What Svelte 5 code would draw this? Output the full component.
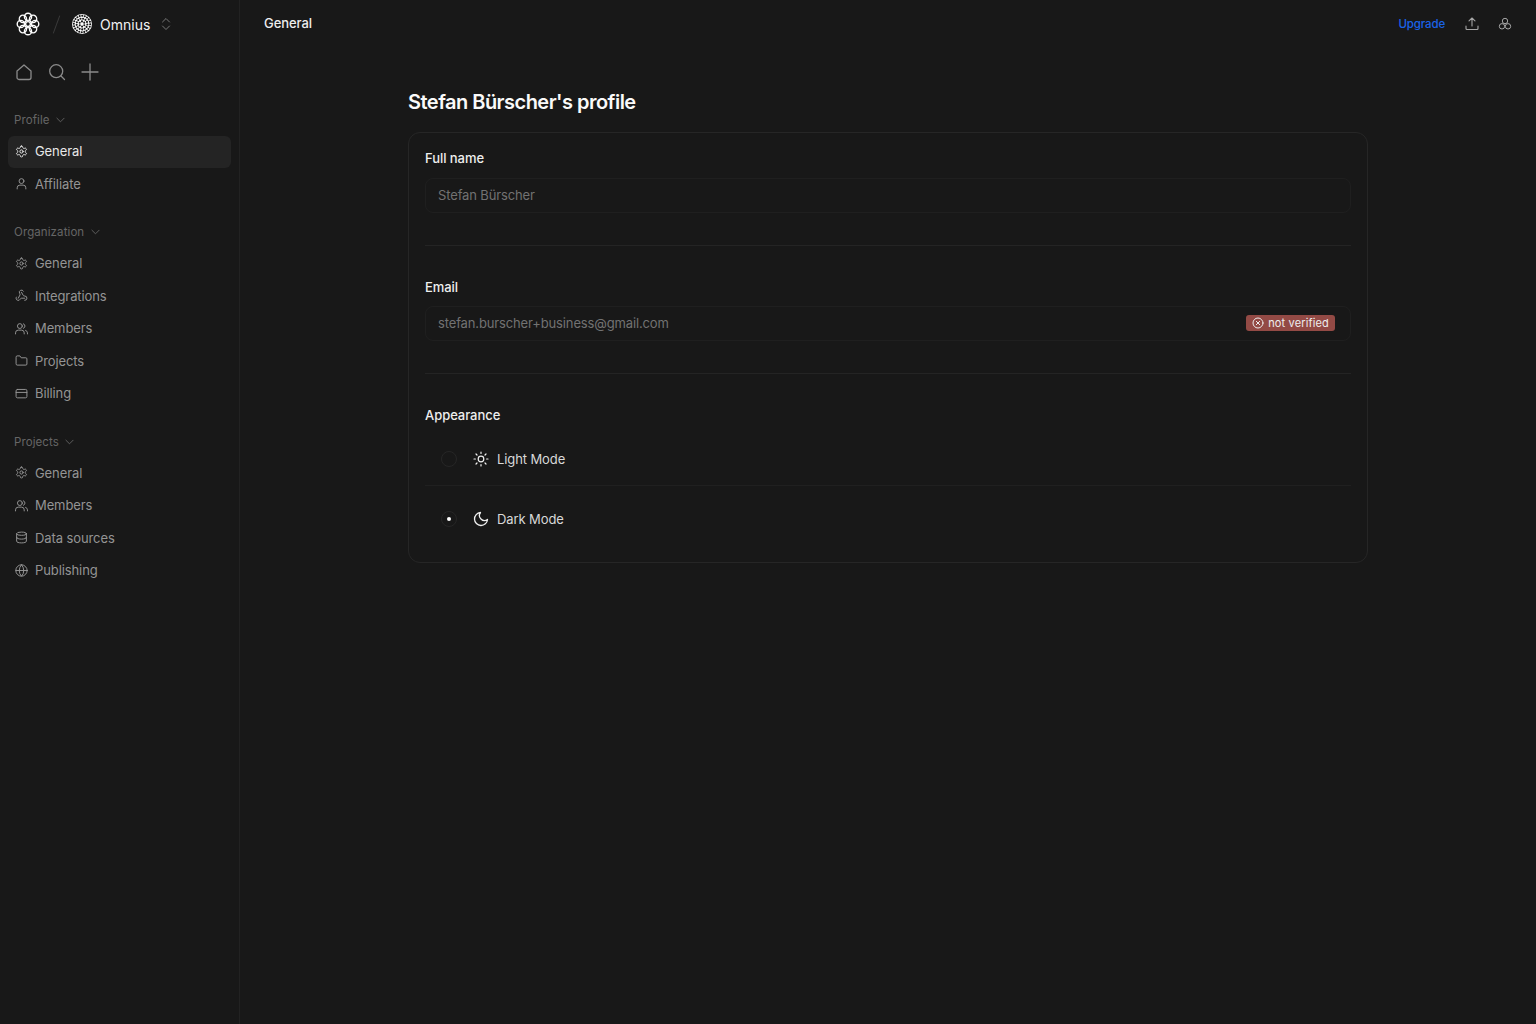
<script lang="ts">
	type NavItem = { label: string; icon: string; active?: boolean };
	type NavSection = { title: string; items: NavItem[] };

	const sections: NavSection[] = [
		{
			title: 'Profile',
			items: [
				{ label: 'General', icon: 'gear', active: true },
				{ label: 'Affiliate', icon: 'user' }
			]
		},
		{
			title: 'Organization',
			items: [
				{ label: 'General', icon: 'gear' },
				{ label: 'Integrations', icon: 'webhook' },
				{ label: 'Members', icon: 'users' },
				{ label: 'Projects', icon: 'folder' },
				{ label: 'Billing', icon: 'card' }
			]
		},
		{
			title: 'Projects',
			items: [
				{ label: 'General', icon: 'gear' },
				{ label: 'Members', icon: 'users' },
				{ label: 'Data sources', icon: 'db' },
				{ label: 'Publishing', icon: 'globe' }
			]
		}
	];

	const petals = [0, 45, 90, 135, 180, 225, 270, 315];

	// dot pattern of the workspace avatar
	const dots: { x: number; y: number }[] = [];
	for (let r = 2.6; r < 10; r += 2.8) {
		const n = Math.round(r * 2.4);
		for (let i = 0; i < n; i++) {
			const a = (i / n) * Math.PI * 2 + r;
			dots.push({ x: 10 + r * Math.cos(a), y: 10 + r * Math.sin(a) });
		}
	}
</script>

{#snippet navIcon(name: string)}
	<svg class="nav-icon" viewBox="0 0 24 24" fill="none" stroke="currentColor" stroke-width="1.8" stroke-linecap="round" stroke-linejoin="round">
		{#if name === 'gear'}
			<path d="M12.22 2h-.44a2 2 0 0 0-2 2v.18a2 2 0 0 1-1 1.73l-.43.25a2 2 0 0 1-2 0l-.15-.08a2 2 0 0 0-2.73.73l-.22.38a2 2 0 0 0 .73 2.73l.15.1a2 2 0 0 1 1 1.72v.51a2 2 0 0 1-1 1.74l-.15.09a2 2 0 0 0-.73 2.73l.22.38a2 2 0 0 0 2.73.73l.15-.08a2 2 0 0 1 2 0l.43.25a2 2 0 0 1 1 1.73V20a2 2 0 0 0 2 2h.44a2 2 0 0 0 2-2v-.18a2 2 0 0 1 1-1.73l.43-.25a2 2 0 0 1 2 0l.15.08a2 2 0 0 0 2.73-.73l.22-.39a2 2 0 0 0-.73-2.73l-.15-.08a2 2 0 0 1-1-1.74v-.5a2 2 0 0 1 1-1.74l.15-.09a2 2 0 0 0 .73-2.73l-.22-.38a2 2 0 0 0-2.73-.73l-.15.08a2 2 0 0 1-2 0l-.43-.25a2 2 0 0 1-1-1.73V4a2 2 0 0 0-2-2z" />
			<circle cx="12" cy="12" r="3" />
		{:else if name === 'user'}
			<circle cx="12" cy="7.5" r="4.5" />
			<path d="M4 22v-2a5 5 0 0 1 5-5h6a5 5 0 0 1 5 5v2" />
		{:else if name === 'webhook'}
			<path d="M18 16.98h-5.99c-1.1 0-1.95.94-2.48 1.9A4 4 0 0 1 2 17c.01-.7.2-1.4.57-2" />
			<path d="M6 17l3.13-5.78c.53-.97.1-2.18-.5-3.1a4 4 0 1 1 6.89-4.06" />
			<path d="M12 6l3.13 5.73C15.66 12.7 16.9 13 18 13a4 4 0 0 1 0 8" />
		{:else if name === 'users'}
			<circle cx="9" cy="7.5" r="4.500" />
			<path d="M1 22v-2a5 5 0 0 1 5-5h6a5 5 0 0 1 5 5v2" />
			<path d="M15.500 3.300a4.500 4.500 0 0 1 0 8.400" />
			<path d="M19.500 15.400a5 5 0 0 1 3.500 4.600v2" />
		{:else if name === 'folder'}
			<path d="M2 5.500A2 2 0 0 1 4 3.500h5l2.500 3.500H20a2 2 0 0 1 2 2v9.500a2 2 0 0 1-2 2H4a2 2 0 0 1-2-2z" />
		{:else if name === 'card'}
			<rect x="2" y="4.500" width="20" height="15.500" rx="2.500" />
			<path d="M2 10h20" />
		{:else if name === 'db'}
			<ellipse cx="12" cy="5" rx="9" ry="3" />
			<path d="M3 5v14c0 1.660 4 3 9 3s9-1.340 9-3V5" />
			<path d="M3 12c0 1.660 4 3 9 3s9-1.340 9-3" />
		{:else if name === 'globe'}
			<circle cx="12" cy="12" r="10.500" />
			<path d="M1.500 12h21" />
			<path d="M12 1.500a15 15 0 0 1 0 21a15 15 0 0 1 0-21z" />
		{/if}
	</svg>
{/snippet}

{#snippet chevron()}
	<svg class="chev" viewBox="0 0 10 6" fill="none" stroke="currentColor" stroke-width="1" stroke-linecap="round" stroke-linejoin="round">
		<path d="M1 1l4 4 4-4" />
	</svg>
{/snippet}

<div class="app">
	<aside class="sidebar">
		<div class="brand">
			<svg class="logo" viewBox="0 0 24 24" fill="none" stroke="#fff" stroke-width="1.400">
				{#each petals as deg}
					<circle cx="12" cy="4.800" r="3.600" transform="rotate({deg} 12 12)" />
				{/each}
				<circle cx="12" cy="12" r="2.400" />
			</svg>
			<span class="slash"></span>
			<svg class="avatar" viewBox="0 0 20 20">
				<circle cx="10" cy="10" r="10" fill="#fff" />
				{#each dots as d}
					<circle cx={d.x} cy={d.y} r="1.050" fill="#181818" />
				{/each}
			</svg>
			<span class="org">Omnius</span>
			<svg class="updown" viewBox="0 0 10 14" fill="none" stroke="currentColor" stroke-width="1" stroke-linecap="round" stroke-linejoin="round">
				<path d="M1.500 5L5 1.500 8.500 5" />
				<path d="M1.500 9L5 12.500 8.500 9" />
			</svg>
		</div>

		<div class="quick">
			<svg viewBox="0 0 18 18" fill="none" stroke="currentColor" stroke-width="1.300" stroke-linejoin="round">
				<path d="M2 8l7-6 7 6v6.500a2 2 0 0 1-2 2H4a2 2 0 0 1-2-2z" />
			</svg>
			<svg viewBox="0 0 18 18" fill="none" stroke="currentColor" stroke-width="1.300" stroke-linecap="round">
				<circle cx="8.200" cy="8.200" r="6.500" />
				<path d="M13 13l3.500 3.500" />
			</svg>
			<svg viewBox="0 0 18 18" fill="none" stroke="currentColor" stroke-width="1.300" stroke-linecap="round">
				<path d="M9 1v16M1 9h16" />
			</svg>
		</div>

		{#each sections as section}
			<section class="nav-section">
				<div class="nav-title">{section.title} {@render chevron()}</div>
				<ul>
					{#each section.items as item}
						<li class:active={item.active}>
							{@render navIcon(item.icon)}
							<span>{item.label}</span>
						</li>
					{/each}
				</ul>
			</section>
		{/each}
	</aside>

	<div class="main">
		<header class="topbar">
			<span class="crumb">General</span>
			<div class="actions">
				<span class="upgrade">Upgrade</span>
				<svg class="action-icon" viewBox="0 0 14 14" fill="none" stroke="currentColor" stroke-width="1.100" stroke-linecap="round" stroke-linejoin="round">
					<path d="M7 9V1M4 3.800L7 1l3 2.800" />
					<path d="M1 9v2.500a1 1 0 0 0 1 1h10a1 1 0 0 0 1-1V9" />
				</svg>
				<svg class="action-icon" viewBox="0 0 14 14" fill="none" stroke="currentColor" stroke-width="1">
					<circle cx="7" cy="4" r="2.700" />
					<circle cx="4" cy="9.300" r="2.700" />
					<circle cx="10" cy="9.300" r="2.700" />
				</svg>
			</div>
		</header>

		<main class="content">
			<h1>Stefan Bürscher's profile</h1>
			<div class="card">
				<div class="field">
					<div class="label">Full name</div>
					<div class="input">Stefan Bürscher</div>
				</div>
				<hr />
				<div class="field tight">
					<div class="label">Email</div>
					<div class="input">
						stefan.burscher+business@gmail.com
						<span class="badge">
							<svg viewBox="0 0 12 12" fill="none" stroke="currentColor" stroke-width="1" stroke-linecap="round">
								<circle cx="6" cy="6" r="5" />
								<path d="M4.300 4.300l3.400 3.400M7.700 4.300L4.300 7.700" />
							</svg>
							not verified
						</span>
					</div>
				</div>
				<hr />
				<div class="label">Appearance</div>
				<div class="modes">
					<div class="mode">
						<span class="radio"></span>
						<svg class="mode-icon" viewBox="0 0 16 16" fill="none" stroke="currentColor" stroke-width="1.200" stroke-linecap="round">
							<circle cx="8" cy="8" r="2.800" />
							<path d="M8 1v1.400M8 13.600V15M1 8h1.400M13.600 8H15M3 3l1 1M12 12l1 1M3 13l1-1M12 4l1-1" />
						</svg>
						<span>Light Mode</span>
					</div>
					<div class="mode">
						<span class="radio on"></span>
						<svg class="mode-icon" viewBox="0 0 16 16" fill="none" stroke="currentColor" stroke-width="1.300" stroke-linecap="round" stroke-linejoin="round">
							<path d="M7.500 1.500a6.500 6.500 0 1 0 7 7A5 5 0 0 1 7.500 1.500z" />
						</svg>
						<span>Dark Mode</span>
					</div>
				</div>
			</div>
		</main>
	</div>
</div>

<style>
	:global(body) {
		background: #181818;
	}

	.app {
		display: flex;
		height: 1024px;
		overflow: hidden;
		background: #181818;
		color: #fff;
		font-family: Inter, 'Liberation Sans', sans-serif;
		font-size: 13px;
	}

	.sidebar {
		width: 240px;
		flex-shrink: 0;
		box-sizing: border-box;
		border-right: 1px solid #222;
		padding: 12px 8px 0;
	}

	.brand {
		display: flex;
		align-items: center;
		height: 24px;
		padding-left: 8px;
	}

	.logo {
		width: 24px;
		height: 24px;
	}

	.slash {
		width: 1px;
		height: 19px;
		margin: 0 15px 0 16px;
		background: #3a3a3a;
		transform: rotate(20deg);
	}

	.avatar {
		width: 20px;
		height: 20px;
	}

	.org {
		margin-left: 8px;
		font-size: 14px;
		color: #f2f2f2;
	}

	.updown {
		width: 10px;
		height: 14px;
		margin-left: 11px;
		color: #777;
	}

	.quick {
		display: flex;
		gap: 15px;
		margin-top: 27px;
		padding-left: 7px;
		color: #8a8a8a;
	}

	.quick svg {
		width: 18px;
		height: 18px;
	}

	.nav-section {
		margin-bottom: 24.500px;
	}

	.quick + .nav-section {
		margin-top: 32px;
	}

	.nav-title {
		display: flex;
		align-items: center;
		gap: 6.500px;
		box-sizing: border-box;
		height: 16px;
		padding: 0 0 2px 6px;
		font-size: 11.500px;
		color: #666;
		letter-spacing: 0.100px;
	}

	.chev {
		width: 9px;
		height: 6px;
	}

	ul {
		list-style: none;
		margin: 7px 0 0;
		padding: 0;
		display: flex;
		flex-direction: column;
		gap: 0.500px;
	}

	li {
		display: flex;
		align-items: center;
		gap: 7px;
		box-sizing: border-box;
		height: 32px;
		padding: 0 0 2px 7px;
		border-radius: 6px;
		line-height: 16px;
		color: #949494;
		letter-spacing: -0.100px;
	}

	li.active {
		background: #242424;
		color: #e8e8e8;
	}

	.nav-icon {
		width: 13px;
		height: 13px;
		flex-shrink: 0;
	}

	.main {
		flex: 1;
		min-width: 0;
	}

	.topbar {
		display: flex;
		align-items: center;
		justify-content: space-between;
		height: 46px;
		padding: 0 24px;
	}

	.crumb {
		color: #eee;
		font-weight: 500;
		letter-spacing: -0.050px;
	}

	.actions {
		display: flex;
		align-items: center;
		gap: 19px;
		padding-top: 2px;
	}

	.upgrade {
		color: #1a63e8;
		font-size: 11.500px;
		font-weight: 500;
		letter-spacing: -0.150px;
		margin-right: 1px;
	}

	.action-icon {
		width: 14px;
		height: 14px;
		color: #a5a5a5;
	}

	.content {
		width: 960px;
		margin-left: 168px;
		padding-top: 43px;
	}

	h1 {
		margin: 0 0 17px;
		font-size: 20px;
		line-height: 26px;
		font-weight: 600;
		letter-spacing: -0.520px;
		color: #fafafa;
	}

	.card {
		box-sizing: border-box;
		height: 431px;
		border: 1px solid #262626;
		border-radius: 12px;
		padding: 17px 16px 0;
	}

	.label {
		height: 17px;
		line-height: 17px;
		color: #eee;
		font-weight: 500;
		letter-spacing: -0.050px;
	}

	.input {
		display: flex;
		align-items: center;
		justify-content: space-between;
		height: 35px;
		box-sizing: border-box;
		margin-top: 11px;
		padding: 0 15px 1px 12px;
		border: 1px solid #1f1f1f;
		border-radius: 8px;
		color: #727272;
		letter-spacing: -0.140px;
	}

	.tight .input {
		margin-top: 10px;
	}

	hr {
		height: 1px;
		margin: 32px 0 33px;
		border: 0;
		background: #242424;
	}

	.badge {
		display: flex;
		align-items: center;
		gap: 4px;
		height: 16px;
		padding: 0 6px;
		border-radius: 3px;
		background: #934a45;
		color: #eee;
		font-size: 11px;
		letter-spacing: 0.150px;
	}

	.badge svg {
		width: 12px;
		height: 12px;
	}

	.modes {
		margin-top: 9px;
	}

	.mode {
		display: flex;
		align-items: center;
		height: 52px;
		padding-left: 16px;
		color: #d8d8d8;
		letter-spacing: -0.100px;
	}

	.mode + .mode {
		border-top: 1px solid #202020;
		height: 66px;
	}

	.radio {
		position: relative;
		width: 14px;
		height: 14px;
		border: 1px solid #262626;
		border-radius: 50%;
		margin-right: 16px;
	}

	.radio.on::after {
		content: '';
		position: absolute;
		left: 5px;
		top: 5px;
		width: 4px;
		height: 4px;
		border-radius: 50%;
		background: #fff;
	}

	.mode-icon {
		width: 16px;
		height: 16px;
		margin-right: 8px;
		color: #f0f0f0;
	}
</style>
